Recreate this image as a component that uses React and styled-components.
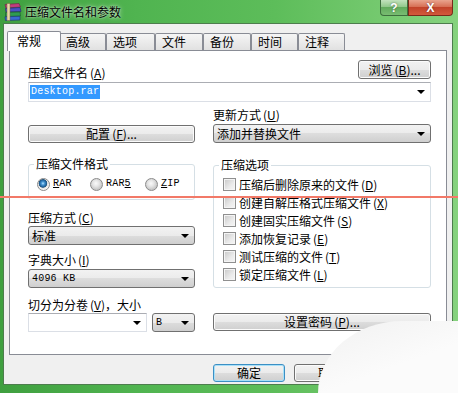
import React from "react";
import styled, { createGlobalStyle } from "styled-components";

const GlobalStyle = createGlobalStyle`
  html, body {
    margin: 0;
    padding: 0;
  }

  body {
    width: 458px;
    height: 393px;
    overflow: hidden;
    font-family: "Noto Sans CJK SC", "Liberation Sans", sans-serif;
    font-size: 12px;
    color: #000;
  }
`;

const Window = styled.div`
  position: relative;
  width: 458px;
  height: 393px;
  box-sizing: border-box;
  padding-bottom: 8px;
  display: flex;
  flex-direction: column;
  overflow: hidden;
  background: linear-gradient(90deg, #3f9f3f 0%, #50b450 30%, #5dbd5a 60%, #86d27e 100%);
`;

const TitleBar = styled.div`
  flex: none;
  height: 23px;
  display: flex;
  align-items: flex-start;
  padding: 0 5px 0 3px;
`;

const IconBox = styled.div`
  width: 19px;
  height: 19px;
  margin-top: 2px;
`;

const Title = styled.span`
  margin-left: 3px;
  line-height: 24px;
  font-size: 12px;
  text-shadow: 0 0 5px rgba(255, 255, 255, 0.75), 0 0 2px rgba(255, 255, 255, 0.6);
`;

const CaptionButtons = styled.div`
  margin-left: auto;
  display: flex;
`;

const CaptionButton = styled.div`
  width: ${(p) => p.$w}px;
  height: 16px;
  box-sizing: border-box;
  display: flex;
  align-items: center;
  justify-content: center;
  border: 1px solid ${(p) => (p.$close ? "#7a2a1a" : "#3d6e3d")};
  border-top: none;
  border-radius: ${(p) => (p.$close ? "0 0 4px 0" : "0 0 0 4px")};
  color: #fff;
  font-family: "Liberation Sans", sans-serif;
  font-weight: bold;
  font-size: 12px;
  line-height: 14px;
  text-shadow: 0 0 2px rgba(0, 0, 0, 0.5);
  background: ${(p) =>
    p.$close
      ? "linear-gradient(#e9a48e, #d56a4f 50%, #c2432a 50%, #d35a3c)"
      : "linear-gradient(#c2e2bd, #8cc686 50%, #62ab5d 50%, #79bd72)"};
`;

const Body = styled.div`
  flex: 1;
  margin: 0 5px 0 3px;
  box-sizing: border-box;
  border: 1px solid #4d7d4d;
  background: #f0f0f0;
  padding: 9px 5px 2px;
  display: flex;
  flex-direction: column;
`;

const TabRow = styled.div`
  position: relative;
  z-index: 1;
  height: 17px;
  display: flex;
  align-items: flex-end;
`;

const Tab = styled.div`
  box-sizing: border-box;
  width: ${(p) => (p.$active ? p.$w + 4 : p.$w)}px;
  height: ${(p) => (p.$active ? 20 : 17)}px;
  margin: ${(p) => (p.$active ? "0 -2px -1px" : "0")};
  padding-left: ${(p) => (p.$active ? 9 : 6)}px;
  border: 1px solid #898c95;
  border-bottom: none;
  border-radius: 2px 2px 0 0;
  line-height: ${(p) => (p.$active ? 17 : 16)}px;
  background: ${(p) => (p.$active ? "#fff" : "linear-gradient(#f5f5f5, #e1e1e1)")};
  position: relative;
  z-index: ${(p) => (p.$active ? 2 : 1)};
`;

const Panel = styled.div`
  flex: none;
  height: 305px;
  box-sizing: border-box;
  border: 1px solid #898c95;
  background: #fff;
  padding: 9px 15px 0 18px;
`;

const TopRow = styled.div`
  display: flex;
  justify-content: space-between;
  align-items: flex-start;
`;

const Label = styled.div`
  line-height: 14px;
  margin-top: ${(p) => p.$mt || 0}px;
  white-space: nowrap;
`;

const Key = styled.span`
  text-decoration: underline;
`;

const Paren = styled.span`
  margin-left: 2px;
`;

const Button = styled.div`
  box-sizing: border-box;
  width: ${(p) => (p.$w ? `${p.$w}px` : "auto")};
  height: ${(p) => p.$h || 18}px;
  margin-top: ${(p) => p.$mt || 0}px;
  display: flex;
  align-items: center;
  justify-content: center;
  border: 1px solid ${(p) => (p.$default ? "#3c8fc4" : "#707070")};
  border-radius: 3px;
  box-shadow: ${(p) => (p.$default ? "inset 0 0 0 1px #a8e0f8" : "inset 0 0 0 1px #fbfbfb")};
  background: linear-gradient(#f2f2f2, #ebebeb 50%, #dddddd 50%, #cfcfcf);
  line-height: 14px;
  white-space: nowrap;
`;

const Combo = styled.div`
  box-sizing: border-box;
  width: ${(p) => (p.$w ? `${p.$w}px` : "auto")};
  height: ${(p) => p.$h || 19}px;
  margin-top: ${(p) => p.$mt || 0}px;
  display: flex;
  align-items: center;
  padding-left: ${(p) => (p.$edit ? 1 : 3)}px;
  border: 1px solid ${(p) => (p.$edit ? "#dbdfe6" : "#707070")};
  border-top-color: ${(p) => (p.$edit ? "#abadb3" : "#707070")};
  border-radius: ${(p) => (p.$edit ? 0 : 3)}px;
  background: ${(p) =>
    p.$edit ? "#fff" : "linear-gradient(#f2f2f2, #ebebeb 50%, #dddddd 50%, #cfcfcf)"};
  line-height: 14px;
`;

const Mono = styled.span`
  font-family: "Liberation Mono", monospace;
  font-size: 10px;
  letter-spacing: 0.2px;
  background: ${(p) => (p.$selected ? "#3399ff" : "transparent")};
  color: ${(p) => (p.$selected ? "#fff" : "#000")};
  padding: ${(p) => (p.$selected ? "0 1px" : "0")};
  line-height: 14px;
`;

const Arrow = styled.span`
  margin-left: auto;
  margin-right: 5px;
  width: 0;
  height: 0;
  border-left: 4px solid transparent;
  border-right: 4px solid transparent;
  border-top: 4px solid #000;
`;

const Columns = styled.div`
  display: grid;
  grid-template-columns: 167px 218px;
  column-gap: 18px;
`;

const Column = styled.div`
  display: flex;
  flex-direction: column;
`;

const Group = styled.fieldset`
  margin: ${(p) => p.$mt || 0}px 0 0;
  padding: ${(p) => p.$pad};
  min-width: 0;
  border: 1px solid #d5dfe5;
  border-radius: 3px;
`;

const Legend = styled.legend`
  margin-left: ${(p) => p.$ml}px;
  padding: 0 2px;
  line-height: 14px;
`;

const RadioRow = styled.div`
  display: grid;
  grid-template-columns: 53px 55px auto;
  height: 14px;
`;

const Option = styled.label`
  display: flex;
  align-items: center;
  gap: ${(p) => p.$gap || 3}px;
  height: ${(p) => p.$h || 14}px;
  white-space: nowrap;
`;

const RadioDot = styled.span`
  flex: none;
  width: 13px;
  height: 13px;
  box-sizing: border-box;
  border-radius: 50%;
  border: 1px solid #8b8b8b;
  background: ${(p) =>
    p.$checked
      ? "radial-gradient(circle at 45% 40%, #b8e6ff 0, #4a9ad8 1.5px, #1c5d96 3.5px, #2a5a80 4px, #e2e2e2 4.6px, #f4f4f4 6px)"
      : "radial-gradient(circle at 45% 40%, #fafafa 0, #e6e6e6 3px, #c9c9c9 6px)"};
`;

const CheckBox = styled.span`
  flex: none;
  width: 13px;
  height: 13px;
  box-sizing: border-box;
  border: 1px solid #8f8f8f;
  box-shadow: inset 0 0 0 1px #f4f4f4;
  background: linear-gradient(135deg, #c8c8c8, #eaeaea 60%, #f6f6f6);
`;

const SplitRow = styled.div`
  display: flex;
  gap: 5px;
  margin-top: 1px;
`;

const ButtonRow = styled.div`
  display: flex;
  gap: 9px;
  margin-top: 9px;
  padding-left: 204px;
`;

const PageFade = styled.div`
  position: absolute;
  right: 0;
  bottom: 0;
  width: 140px;
  height: 72px;
  border-top-left-radius: 60% 100%;
  background: linear-gradient(160deg, #f1f1f1, #fbfbfb 60%);
`;

const MarkLine = styled.div`
  position: absolute;
  top: 196px;
  left: 0;
  right: 0;
  height: 2px;
  background: #f27968;
`;

const tabs = [
  { name: "常规", w: 50 },
  { name: "高级", w: 47 },
  { name: "选项", w: 49 },
  { name: "文件", w: 48 },
  { name: "备份", w: 48 },
  { name: "时间", w: 47 },
  { name: "注释", w: 47 },
];

const options = [
  ["压缩后删除原来的文件", "D"],
  ["创建自解压格式压缩文件", "X"],
  ["创建固实压缩文件", "S"],
  ["添加恢复记录", "E"],
  ["测试压缩的文件", "T"],
  ["锁定压缩文件", "L"],
];

function RarIcon() {
  return (
    <svg width="19" height="19" viewBox="0 0 19 19">
      <path d="M2 2.5 L16 1.5 L17.5 5 L3 6 Z" fill="#c23d7d" stroke="#6b1f44" strokeWidth="0.6" />
      <path d="M2.5 6.5 L17 5.5 L18 9.5 L3 10 Z" fill="#4a4fc4" stroke="#22246b" strokeWidth="0.6" />
      <path d="M2.5 10.5 L17 10 L17.5 14 L2.5 14.5 Z" fill="#2f9a52" stroke="#175a2c" strokeWidth="0.6" />
      <path d="M2 14.8 L17 14.3 L17 18 L2.5 18.5 Z" fill="#3a6ad0" stroke="#1b356e" strokeWidth="0.6" />
      <rect x="4" y="1.5" width="3" height="17" fill="#e8d7a8" stroke="#7a6a40" strokeWidth="0.5" />
    </svg>
  );
}

function Mnemonic({ text, k, suffix = "" }) {
  return (
    <>
      {text}
      <Paren>
        (<Key>{k}</Key>)
      </Paren>
      {suffix}
    </>
  );
}

function App() {
  return (
    <Window>
      <GlobalStyle />
      <TitleBar>
        <IconBox>
          <RarIcon />
        </IconBox>
        <Title>压缩文件名和参数</Title>
        <CaptionButtons>
          <CaptionButton $w={28}>?</CaptionButton>
          <CaptionButton $w={45} $close>
            X
          </CaptionButton>
        </CaptionButtons>
      </TitleBar>

      <Body>
        <TabRow>
          {tabs.map((t, i) => (
            <Tab key={t.name} $w={t.w} $active={i === 0}>
              {t.name}
            </Tab>
          ))}
        </TabRow>

        <Panel>
          <TopRow>
            <Label $mt={6}>
              <Mnemonic text="压缩文件名" k="A" />
            </Label>
            <Button $w={73} $h={19}>
              <Mnemonic text="浏览" k="B" suffix="..." />
            </Button>
          </TopRow>
          <Combo $edit $h={20} $mt={2}>
            <Mono $selected>Desktop.rar</Mono>
            <Arrow />
          </Combo>

          <Columns>
            <Column>
              <Button $mt={23}>
                <Mnemonic text="配置" k="F" suffix="..." />
              </Button>
              <Group $mt={14} $pad="6px 8px 8px">
                <Legend $ml={-3}>压缩文件格式</Legend>
                <RadioRow>
                  <Option>
                    <RadioDot $checked />
                    <Mono>
                      <Key>R</Key>AR
                    </Mono>
                  </Option>
                  <Option>
                    <RadioDot />
                    <Mono>
                      RAR<Key>5</Key>
                    </Mono>
                  </Option>
                  <Option>
                    <RadioDot />
                    <Mono>
                      <Key>Z</Key>IP
                    </Mono>
                  </Option>
                </RadioRow>
              </Group>
              <Label $mt={11}>
                <Mnemonic text="压缩方式" k="C" />
              </Label>
              <Combo $mt={1}>
                标准
                <Arrow />
              </Combo>
              <Label $mt={8}>
                <Mnemonic text="字典大小" k="I" />
              </Label>
              <Combo $mt={2}>
                <Mono>4096 KB</Mono>
                <Arrow />
              </Combo>
              <Label $mt={10}>
                <Mnemonic text="切分为分卷" k="V" suffix="，大小" />
              </Label>
              <SplitRow>
                <Combo $edit $w={119}>
                  <Arrow />
                </Combo>
                <Combo $w={43}>
                  <Mono>B</Mono>
                  <Arrow />
                </Combo>
              </SplitRow>
            </Column>

            <Column>
              <Label $mt={6}>
                <Mnemonic text="更新方式" k="U" />
              </Label>
              <Combo $mt={2}>
                添加并替换文件
                <Arrow />
              </Combo>
              <Group $mt={15} $pad="3px 8px 4px 9px">
                <Legend $ml={-4}>压缩选项</Legend>
                {options.map(([text, k]) => (
                  <Option key={k} $h={18} $gap={3}>
                    <CheckBox />
                    <span>
                      <Mnemonic text={text} k={k} />
                    </span>
                  </Option>
                ))}
              </Group>
              <Button $mt={25}>
                <Mnemonic text="设置密码" k="P" suffix="..." />
              </Button>
            </Column>
          </Columns>
        </Panel>

        <ButtonRow>
          <Button $w={73} $default>
            确定
          </Button>
          <Button $w={73}>取消</Button>
          <Button $w={73}>帮助</Button>
        </ButtonRow>
      </Body>

      <PageFade />
      <MarkLine />
    </Window>
  );
}

export default App;
